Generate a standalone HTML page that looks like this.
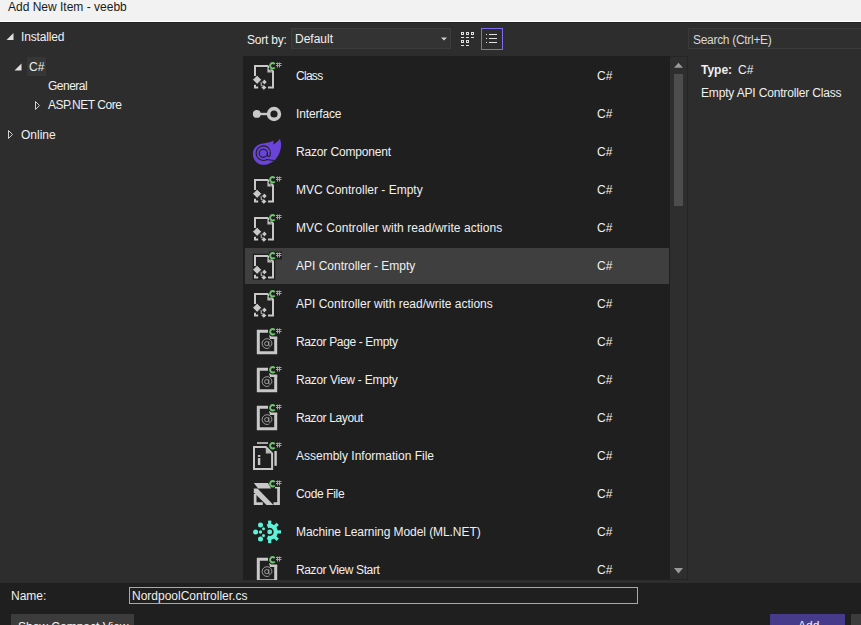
<!DOCTYPE html>
<html><head><meta charset="utf-8">
<style>
*{margin:0;padding:0;box-sizing:border-box}
html,body{width:861px;height:625px;overflow:hidden;background:#2d2d2d;font-family:"Liberation Sans",sans-serif;font-size:12px;color:#f0f0f0}
.abs{position:absolute;white-space:nowrap}
#title{position:absolute;left:0;top:0;width:861px;height:21px;background:#f2f2f2;border-bottom:0}
#tline1{position:absolute;left:0;top:21px;width:861px;height:1px;background:#fff}
#tline2{position:absolute;left:0;top:22px;width:861px;height:1px;background:#232323}
#ttext{position:absolute;left:8px;top:-1px;color:#1a1a1a;font-size:12px;line-height:16px}
.tri-e{position:absolute;width:0;height:0}
#list{position:absolute;left:243px;top:56px;width:445px;height:524px;background:#1f1f1f;overflow:hidden}
.row{position:absolute;left:2px;width:424px;height:36px}
.row.sel{background:#3f3f3f}
.row .nm{position:absolute;left:51px;top:10px;line-height:16px}
.row .lg{position:absolute;left:352px;top:10px;line-height:16px}
.row svg{position:absolute;left:0;top:0}
#sb{position:absolute;left:427px;top:0;width:18px;height:524px;background:#2e2e2e;border-right:1px solid #252525;border-bottom:1px solid #252525;border-top:1px solid #252525}
#bottom{position:absolute;left:0;top:583px;width:861px;height:42px;background:#1f1f1f}
</style></head><body>
<div id="title"><div id="ttext">Add New Item - veebb</div></div>
<div id="tline1"></div><div id="tline2"></div>

<!-- left tree -->
<svg class="abs" style="left:0;top:0" width="240" height="150">
  <polygon points="13.5,33 13.5,40 6.5,40" fill="#e0e0e0"/>
  <polygon points="21.5,63.5 21.5,70.5 14.5,70.5" fill="#e0e0e0"/>
  <polygon points="35.5,101.5 39.5,105.5 35.5,109.5" fill="none" stroke="#d0d0d0" stroke-width="1"/>
  <polygon points="8.5,130.5 12.5,134.5 8.5,138.5" fill="none" stroke="#d0d0d0" stroke-width="1"/>
</svg>
<div class="abs" style="left:27px;top:57px;width:19px;height:19px;background:#363636"></div>
<div class="abs" style="left:21px;top:29px;line-height:16px;letter-spacing:-0.15px">Installed</div>
<div class="abs" style="left:29px;top:59px;line-height:16px">C#</div>
<div class="abs" style="left:48px;top:78px;line-height:16px;letter-spacing:-0.5px">General</div>
<div class="abs" style="left:48px;top:97px;line-height:16px;letter-spacing:-0.45px">ASP.NET Core</div>
<div class="abs" style="left:21px;top:127px;line-height:16px">Online</div>

<!-- toolbar -->
<div class="abs" style="left:247px;top:32px;line-height:16px;letter-spacing:-0.2px">Sort by:</div>
<div class="abs" style="left:291px;top:28px;width:160px;height:21px;background:#333333;border:1px solid #3c3c3c"></div>
<div class="abs" style="left:295px;top:31px;line-height:16px">Default</div>
<svg class="abs" style="left:440px;top:36px" width="10" height="6"><polygon points="1,1.5 7,1.5 4,4.5" fill="#d0d0d0"/></svg>

<div class="abs" style="left:688px;top:28px;width:173px;height:21px;background:#2f2f2f;border:1px solid #3a3a3a;border-right:0"></div>
<div class="abs" style="left:693px;top:32px;line-height:16px;color:#d8d8d8;letter-spacing:-0.3px">Search (Ctrl+E)</div>


<svg class="abs" style="left:458px;top:28px" width="50" height="22">
  <g fill="none" stroke="#e0e0e0" stroke-width="1">
    <rect x="3.5" y="4.5" width="2" height="2"/><rect x="8.5" y="4.5" width="2" height="2"/><rect x="13.5" y="4.5" width="2" height="2"/>
    <rect x="3.5" y="12.5" width="2" height="2"/><rect x="8.5" y="12.5" width="2" height="2"/>
  </g>
  <g stroke="#e0e0e0" stroke-width="1">
    <path d="M3,9.5H6M8,9.5H11M13,9.5H16M3,17.5H6M8,17.5H11"/>
  </g>
  <rect x="23.5" y="0.5" width="21" height="21" fill="none" stroke="#7b6cf0" stroke-width="1"/>
  <g fill="#e0e0e0">
    <rect x="28" y="6" width="1" height="1"/><rect x="28" y="10" width="1" height="1"/><rect x="28" y="14" width="1" height="1"/>
    <rect x="31" y="6" width="8" height="1"/><rect x="31" y="10" width="8" height="1"/><rect x="31" y="14" width="8" height="1"/>
  </g>
</svg>

<!-- right pane -->
<div class="abs" style="left:701px;top:62px;line-height:16px;font-weight:bold">Type:</div>
<div class="abs" style="left:738px;top:62px;line-height:16px">C#</div>
<div class="abs" style="left:701px;top:85px;line-height:16px;letter-spacing:-0.17px">Empty API Controller Class</div>

<div id="list">
<div class="row" style="top:2px"><svg width="40" height="36" viewBox="0 0 40 36">
<path d="M10,8H22.5L28,13.5V29.5H10Z" fill="#222" stroke="#1e1e1e" stroke-width="4.5"/>
<path d="M10,18V8H22.5L28,13.5V29.5H23" fill="none" stroke="#c8c8c8" stroke-width="2"/>
<path d="M10,26.7V29.5H13.2" fill="none" stroke="#c8c8c8" stroke-width="2"/>
<polygon points="22.4,9.5 22.4,14.4 27.3,14.4" fill="#b8b8b8"/>
<polygon points="12.1,17.2 16.7,21.8 12.1,26.4 7.5,21.8" fill="#c8c8c8" stroke="#1f1f1f" stroke-width="1"/>
<path d="M16.2,23.9V27.7H19.4" fill="none" stroke="#c8c8c8" stroke-width="1"/>
<polygon points="19.4,21.2 22.2,24 19.4,26.8 16.6,24" fill="#c8c8c8" stroke="#1f1f1f" stroke-width="0.8"/>
<polygon points="18.9,26.7 21.7,29.5 18.9,32.3 16.1,29.5" fill="#c8c8c8" stroke="#1f1f1f" stroke-width="0.8"/>
<rect x="24" y="3.5" width="13" height="8" fill="#1f1f1f" class="halo"/>
<path d="M29.7,6.1 A2.55,2.75 0 1 0 29.7,9.5" fill="none" stroke="#6cc66c" stroke-width="2"/>
<path d="M32.5,4.5V9.5M34.5,4.5V9.5M31,5.5H36.5M31,7.5H36.5" stroke="#6cc66c" stroke-width="1"/></svg><div class="nm" style="letter-spacing:-0.72px">Class</div><div class="lg">C#</div></div>
<div class="row" style="top:40px"><svg width="40" height="36" viewBox="0 0 40 36">
<circle cx="11.8" cy="17.9" r="3.9" fill="#c8c8c8"/>
<path d="M15,18H24" stroke="#c8c8c8" stroke-width="2.4"/>
<circle cx="29" cy="18" r="5.4" fill="none" stroke="#c8c8c8" stroke-width="3.6"/>
</svg><div class="nm" style="letter-spacing:-0.15px">Interface</div><div class="lg">C#</div></div>
<div class="row" style="top:78px"><svg width="40" height="36" viewBox="0 0 40 36">
<path d="M18,9.5 C21,8.8 25,9 28.6,6.6 L28.3,10.4 C31,9.2 33.5,7 34.7,5.1 C37,9 36.5,15 33.5,21 C30,27.5 24,31 17.8,30.8 C12,30.6 7.8,25.5 7.8,20 C7.8,14 12,10.2 18,9.5Z" fill="#6a43d9"/>
<path d="M25.5,17.5 A7.3,7.3 0 1 0 22,25.5 L29,26.5" fill="none" stroke="#1f1f1f" stroke-width="1.1"/>
<circle cx="18.3" cy="19.3" r="4.1" fill="none" stroke="#1f1f1f" stroke-width="1.1"/>
<path d="M22.4,19.3 V21 A1.4,1.4 0 0 0 25.2,21 V18" fill="none" stroke="#1f1f1f" stroke-width="1.1"/>
</svg><div class="nm" style="letter-spacing:-0.16px">Razor Component</div><div class="lg">C#</div></div>
<div class="row" style="top:116px"><svg width="40" height="36" viewBox="0 0 40 36">
<path d="M10,8H22.5L28,13.5V29.5H10Z" fill="#222" stroke="#1e1e1e" stroke-width="4.5"/>
<path d="M10,18V8H22.5L28,13.5V29.5H23" fill="none" stroke="#c8c8c8" stroke-width="2"/>
<path d="M10,26.7V29.5H13.2" fill="none" stroke="#c8c8c8" stroke-width="2"/>
<polygon points="22.4,9.5 22.4,14.4 27.3,14.4" fill="#b8b8b8"/>
<polygon points="12.1,17.2 16.7,21.8 12.1,26.4 7.5,21.8" fill="#c8c8c8" stroke="#1f1f1f" stroke-width="1"/>
<path d="M16.2,23.9V27.7H19.4" fill="none" stroke="#c8c8c8" stroke-width="1"/>
<polygon points="19.4,21.2 22.2,24 19.4,26.8 16.6,24" fill="#c8c8c8" stroke="#1f1f1f" stroke-width="0.8"/>
<polygon points="18.9,26.7 21.7,29.5 18.9,32.3 16.1,29.5" fill="#c8c8c8" stroke="#1f1f1f" stroke-width="0.8"/>
<rect x="24" y="3.5" width="13" height="8" fill="#1f1f1f" class="halo"/>
<path d="M29.7,6.1 A2.55,2.75 0 1 0 29.7,9.5" fill="none" stroke="#6cc66c" stroke-width="2"/>
<path d="M32.5,4.5V9.5M34.5,4.5V9.5M31,5.5H36.5M31,7.5H36.5" stroke="#6cc66c" stroke-width="1"/></svg><div class="nm">MVC Controller - Empty</div><div class="lg">C#</div></div>
<div class="row" style="top:154px"><svg width="40" height="36" viewBox="0 0 40 36">
<path d="M10,8H22.5L28,13.5V29.5H10Z" fill="#222" stroke="#1e1e1e" stroke-width="4.5"/>
<path d="M10,18V8H22.5L28,13.5V29.5H23" fill="none" stroke="#c8c8c8" stroke-width="2"/>
<path d="M10,26.7V29.5H13.2" fill="none" stroke="#c8c8c8" stroke-width="2"/>
<polygon points="22.4,9.5 22.4,14.4 27.3,14.4" fill="#b8b8b8"/>
<polygon points="12.1,17.2 16.7,21.8 12.1,26.4 7.5,21.8" fill="#c8c8c8" stroke="#1f1f1f" stroke-width="1"/>
<path d="M16.2,23.9V27.7H19.4" fill="none" stroke="#c8c8c8" stroke-width="1"/>
<polygon points="19.4,21.2 22.2,24 19.4,26.8 16.6,24" fill="#c8c8c8" stroke="#1f1f1f" stroke-width="0.8"/>
<polygon points="18.9,26.7 21.7,29.5 18.9,32.3 16.1,29.5" fill="#c8c8c8" stroke="#1f1f1f" stroke-width="0.8"/>
<rect x="24" y="3.5" width="13" height="8" fill="#1f1f1f" class="halo"/>
<path d="M29.7,6.1 A2.55,2.75 0 1 0 29.7,9.5" fill="none" stroke="#6cc66c" stroke-width="2"/>
<path d="M32.5,4.5V9.5M34.5,4.5V9.5M31,5.5H36.5M31,7.5H36.5" stroke="#6cc66c" stroke-width="1"/></svg><div class="nm" style="letter-spacing:0.06px">MVC Controller with read/write actions</div><div class="lg">C#</div></div>
<div class="row sel" style="top:192px"><svg width="40" height="36" viewBox="0 0 40 36">
<path d="M10,8H22.5L28,13.5V29.5H10Z" fill="#222" stroke="#1e1e1e" stroke-width="4.5"/>
<path d="M10,18V8H22.5L28,13.5V29.5H23" fill="none" stroke="#c8c8c8" stroke-width="2"/>
<path d="M10,26.7V29.5H13.2" fill="none" stroke="#c8c8c8" stroke-width="2"/>
<polygon points="22.4,9.5 22.4,14.4 27.3,14.4" fill="#b8b8b8"/>
<polygon points="12.1,17.2 16.7,21.8 12.1,26.4 7.5,21.8" fill="#c8c8c8" stroke="#1f1f1f" stroke-width="1"/>
<path d="M16.2,23.9V27.7H19.4" fill="none" stroke="#c8c8c8" stroke-width="1"/>
<polygon points="19.4,21.2 22.2,24 19.4,26.8 16.6,24" fill="#c8c8c8" stroke="#1f1f1f" stroke-width="0.8"/>
<polygon points="18.9,26.7 21.7,29.5 18.9,32.3 16.1,29.5" fill="#c8c8c8" stroke="#1f1f1f" stroke-width="0.8"/>
<rect x="24" y="3.5" width="13" height="8" fill="#1f1f1f" class="halo"/>
<path d="M29.7,6.1 A2.55,2.75 0 1 0 29.7,9.5" fill="none" stroke="#6cc66c" stroke-width="2"/>
<path d="M32.5,4.5V9.5M34.5,4.5V9.5M31,5.5H36.5M31,7.5H36.5" stroke="#6cc66c" stroke-width="1"/></svg><div class="nm">API Controller - Empty</div><div class="lg">C#</div></div>
<div class="row" style="top:230px"><svg width="40" height="36" viewBox="0 0 40 36">
<path d="M10,8H22.5L28,13.5V29.5H10Z" fill="#222" stroke="#1e1e1e" stroke-width="4.5"/>
<path d="M10,18V8H22.5L28,13.5V29.5H23" fill="none" stroke="#c8c8c8" stroke-width="2"/>
<path d="M10,26.7V29.5H13.2" fill="none" stroke="#c8c8c8" stroke-width="2"/>
<polygon points="22.4,9.5 22.4,14.4 27.3,14.4" fill="#b8b8b8"/>
<polygon points="12.1,17.2 16.7,21.8 12.1,26.4 7.5,21.8" fill="#c8c8c8" stroke="#1f1f1f" stroke-width="1"/>
<path d="M16.2,23.9V27.7H19.4" fill="none" stroke="#c8c8c8" stroke-width="1"/>
<polygon points="19.4,21.2 22.2,24 19.4,26.8 16.6,24" fill="#c8c8c8" stroke="#1f1f1f" stroke-width="0.8"/>
<polygon points="18.9,26.7 21.7,29.5 18.9,32.3 16.1,29.5" fill="#c8c8c8" stroke="#1f1f1f" stroke-width="0.8"/>
<rect x="24" y="3.5" width="13" height="8" fill="#1f1f1f" class="halo"/>
<path d="M29.7,6.1 A2.55,2.75 0 1 0 29.7,9.5" fill="none" stroke="#6cc66c" stroke-width="2"/>
<path d="M32.5,4.5V9.5M34.5,4.5V9.5M31,5.5H36.5M31,7.5H36.5" stroke="#6cc66c" stroke-width="1"/></svg><div class="nm">API Controller with read/write actions</div><div class="lg">C#</div></div>
<div class="row" style="top:268px"><svg width="40" height="36" viewBox="0 0 40 36">
<path d="M23,7.3H13.3V28.8H30.7V13" fill="none" stroke="#c8c8c8" stroke-width="3"/>
<polygon points="24,11 26.5,12.5 32.2,12.5 32.2,15 25,15" fill="#c8c8c8"/>
<circle cx="21.7" cy="19.6" r="2.1" fill="none" stroke="#a8a8a8" stroke-width="0.9"/><path d="M23.8,17.3V21.2Q23.9,22.6 25.3,22.2Q26.9,21.5 26.9,19.6A4.9,4.9 0 1 0 24.3,23.9" fill="none" stroke="#a8a8a8" stroke-width="0.9"/>
<path d="M29.7,6.1 A2.55,2.75 0 1 0 29.7,9.5" fill="none" stroke="#6cc66c" stroke-width="2"/>
<path d="M32.5,4.5V9.5M34.5,4.5V9.5M31,5.5H36.5M31,7.5H36.5" stroke="#6cc66c" stroke-width="1"/></svg><div class="nm" style="letter-spacing:-0.36px">Razor Page - Empty</div><div class="lg">C#</div></div>
<div class="row" style="top:306px"><svg width="40" height="36" viewBox="0 0 40 36">
<path d="M23,7.3H13.3V28.8H30.7V13" fill="none" stroke="#c8c8c8" stroke-width="3"/>
<polygon points="24,11 26.5,12.5 32.2,12.5 32.2,15 25,15" fill="#c8c8c8"/>
<circle cx="21.7" cy="19.6" r="2.1" fill="none" stroke="#a8a8a8" stroke-width="0.9"/><path d="M23.8,17.3V21.2Q23.9,22.6 25.3,22.2Q26.9,21.5 26.9,19.6A4.9,4.9 0 1 0 24.3,23.9" fill="none" stroke="#a8a8a8" stroke-width="0.9"/>
<path d="M29.7,6.1 A2.55,2.75 0 1 0 29.7,9.5" fill="none" stroke="#6cc66c" stroke-width="2"/>
<path d="M32.5,4.5V9.5M34.5,4.5V9.5M31,5.5H36.5M31,7.5H36.5" stroke="#6cc66c" stroke-width="1"/></svg><div class="nm" style="letter-spacing:-0.24px">Razor View - Empty</div><div class="lg">C#</div></div>
<div class="row" style="top:344px"><svg width="40" height="36" viewBox="0 0 40 36">
<path d="M23,7.3H13.3V28.8H30.7V13" fill="none" stroke="#c8c8c8" stroke-width="3"/>
<polygon points="24,11 26.5,12.5 32.2,12.5 32.2,15 25,15" fill="#c8c8c8"/>
<circle cx="21.7" cy="19.6" r="2.1" fill="none" stroke="#a8a8a8" stroke-width="0.9"/><path d="M23.8,17.3V21.2Q23.9,22.6 25.3,22.2Q26.9,21.5 26.9,19.6A4.9,4.9 0 1 0 24.3,23.9" fill="none" stroke="#a8a8a8" stroke-width="0.9"/>
<path d="M29.7,6.1 A2.55,2.75 0 1 0 29.7,9.5" fill="none" stroke="#6cc66c" stroke-width="2"/>
<path d="M32.5,4.5V9.5M34.5,4.5V9.5M31,5.5H36.5M31,7.5H36.5" stroke="#6cc66c" stroke-width="1"/></svg><div class="nm" style="letter-spacing:-0.36px">Razor Layout</div><div class="lg">C#</div></div>
<div class="row" style="top:382px"><svg width="40" height="36" viewBox="0 0 40 36">
<path d="M12,5H23" stroke="#c8c8c8" stroke-width="1.6"/>
<path d="M30.6,13V27.8" stroke="#c8c8c8" stroke-width="2.4"/>
<path d="M9,31V9H20.8L27.1,15.3V31Z" fill="#1f1f1f" stroke="#c8c8c8" stroke-width="2"/>
<polygon points="20.8,10 20.8,15.5 26,15.5" fill="#b8b8b8"/>
<rect x="12.9" y="17" width="2.4" height="1.9" fill="#c8c8c8"/>
<rect x="12.9" y="20" width="2.4" height="7" fill="#c8c8c8"/>
<path d="M29.7,6.1 A2.55,2.75 0 1 0 29.7,9.5" fill="none" stroke="#6cc66c" stroke-width="2"/>
<path d="M32.5,4.5V9.5M34.5,4.5V9.5M31,5.5H36.5M31,7.5H36.5" stroke="#6cc66c" stroke-width="1"/></svg><div class="nm">Assembly Information File</div><div class="lg">C#</div></div>
<div class="row" style="top:420px"><svg width="40" height="36" viewBox="0 0 40 36">
<polygon points="8.8,6.9 23,6.9 26,12.6 13.2,12.6" fill="#c8c8c8"/>
<polygon points="8.8,12.6 12.5,12.6 28.5,28.9 21.5,28.9 8.8,16.5" fill="#c8c8c8"/>
<path d="M10.15,18V27.55H17.8" fill="none" stroke="#c8c8c8" stroke-width="2.7"/>
<path d="M28.5,27.55H33.55V11.5" fill="none" stroke="#c8c8c8" stroke-width="2.7"/>
<path d="M30,11.7H35" stroke="#c8c8c8" stroke-width="1.5"/>
<path d="M29.7,6.1 A2.55,2.75 0 1 0 29.7,9.5" fill="none" stroke="#6cc66c" stroke-width="2"/>
<path d="M32.5,4.5V9.5M34.5,4.5V9.5M31,5.5H36.5M31,7.5H36.5" stroke="#6cc66c" stroke-width="1"/></svg><div class="nm" style="letter-spacing:-0.35px">Code File</div><div class="lg">C#</div></div>
<div class="row" style="top:458px"><svg width="40" height="36" viewBox="0 0 40 36"><path d="M22.45,12.34 A6,6 0 1 1 22.45,23.46" fill="none" stroke="#5ff2d8" stroke-width="4"/>
<path d="M24.70,10.90L24.70,6.60" stroke="#5ff2d8" stroke-width="3.2"/>
<path d="M29.65,12.95L32.69,9.91" stroke="#5ff2d8" stroke-width="3.2"/>
<path d="M31.70,17.90L36.00,17.90" stroke="#5ff2d8" stroke-width="3.2"/>
<path d="M29.65,22.85L32.69,25.89" stroke="#5ff2d8" stroke-width="3.2"/>
<path d="M24.70,24.90L24.70,29.20" stroke="#5ff2d8" stroke-width="3.2"/>
<circle cx="24.7" cy="17.9" r="2.4" fill="#5ff2d8"/>
<circle cx="15.5" cy="11" r="2.5" fill="#5ff2d8"/>
<circle cx="10.6" cy="18" r="2.5" fill="#5ff2d8"/>
<circle cx="15.5" cy="25" r="2.5" fill="#5ff2d8"/>
<circle cx="18.5" cy="14.7" r="1.5" fill="#5ff2d8"/>
<circle cx="15.5" cy="18" r="1.7" fill="#5ff2d8"/>
<circle cx="18.5" cy="21.5" r="1.5" fill="#5ff2d8"/></svg><div class="nm" style="letter-spacing:-0.07px">Machine Learning Model (ML.NET)</div><div class="lg">C#</div></div>
<div class="row" style="top:496px"><svg width="40" height="36" viewBox="0 0 40 36">
<path d="M23,7.3H13.3V28.8H30.7V13" fill="none" stroke="#c8c8c8" stroke-width="3"/>
<polygon points="24,11 26.5,12.5 32.2,12.5 32.2,15 25,15" fill="#c8c8c8"/>
<circle cx="21.7" cy="19.6" r="2.1" fill="none" stroke="#a8a8a8" stroke-width="0.9"/><path d="M23.8,17.3V21.2Q23.9,22.6 25.3,22.2Q26.9,21.5 26.9,19.6A4.9,4.9 0 1 0 24.3,23.9" fill="none" stroke="#a8a8a8" stroke-width="0.9"/>
<path d="M29.7,6.1 A2.55,2.75 0 1 0 29.7,9.5" fill="none" stroke="#6cc66c" stroke-width="2"/>
<path d="M32.5,4.5V9.5M34.5,4.5V9.5M31,5.5H36.5M31,7.5H36.5" stroke="#6cc66c" stroke-width="1"/></svg><div class="nm" style="letter-spacing:-0.40px">Razor View Start</div><div class="lg">C#</div></div>
<div id="sb"><svg width="18" height="524" style="position:absolute;left:0;top:-1px">
<polygon points="4,11.8 13,11.8 8.5,6.8" fill="#999"/>
<rect x="4" y="18" width="9" height="132" fill="#4d4d4d"/>
<polygon points="4,512 13,512 8.5,517.5" fill="#999"/>
</svg></div>
</div>

<div id="bottom"></div>
<div class="abs" style="left:11px;top:588px;line-height:16px">Name:</div>
<div class="abs" style="left:129px;top:587px;width:509px;height:17px;border:1px solid #a8a8a8;background:#1f1f1f"></div>
<div class="abs" style="left:132px;top:588px;line-height:16px">NordpoolController.cs</div>
<div class="abs" style="left:11px;top:614px;width:123px;height:24px;background:#3c3c3c"></div>
<div class="abs" style="left:18px;top:619px;line-height:16px">Show Compact View</div>
<div class="abs" style="left:770px;top:614px;width:75px;height:24px;background:#463a8a"></div>
<div class="abs" style="left:798px;top:618px;line-height:16px">Add</div>
<div class="abs" style="left:851px;top:614px;width:20px;height:24px;background:#3c3c3c"></div>
</body></html>
